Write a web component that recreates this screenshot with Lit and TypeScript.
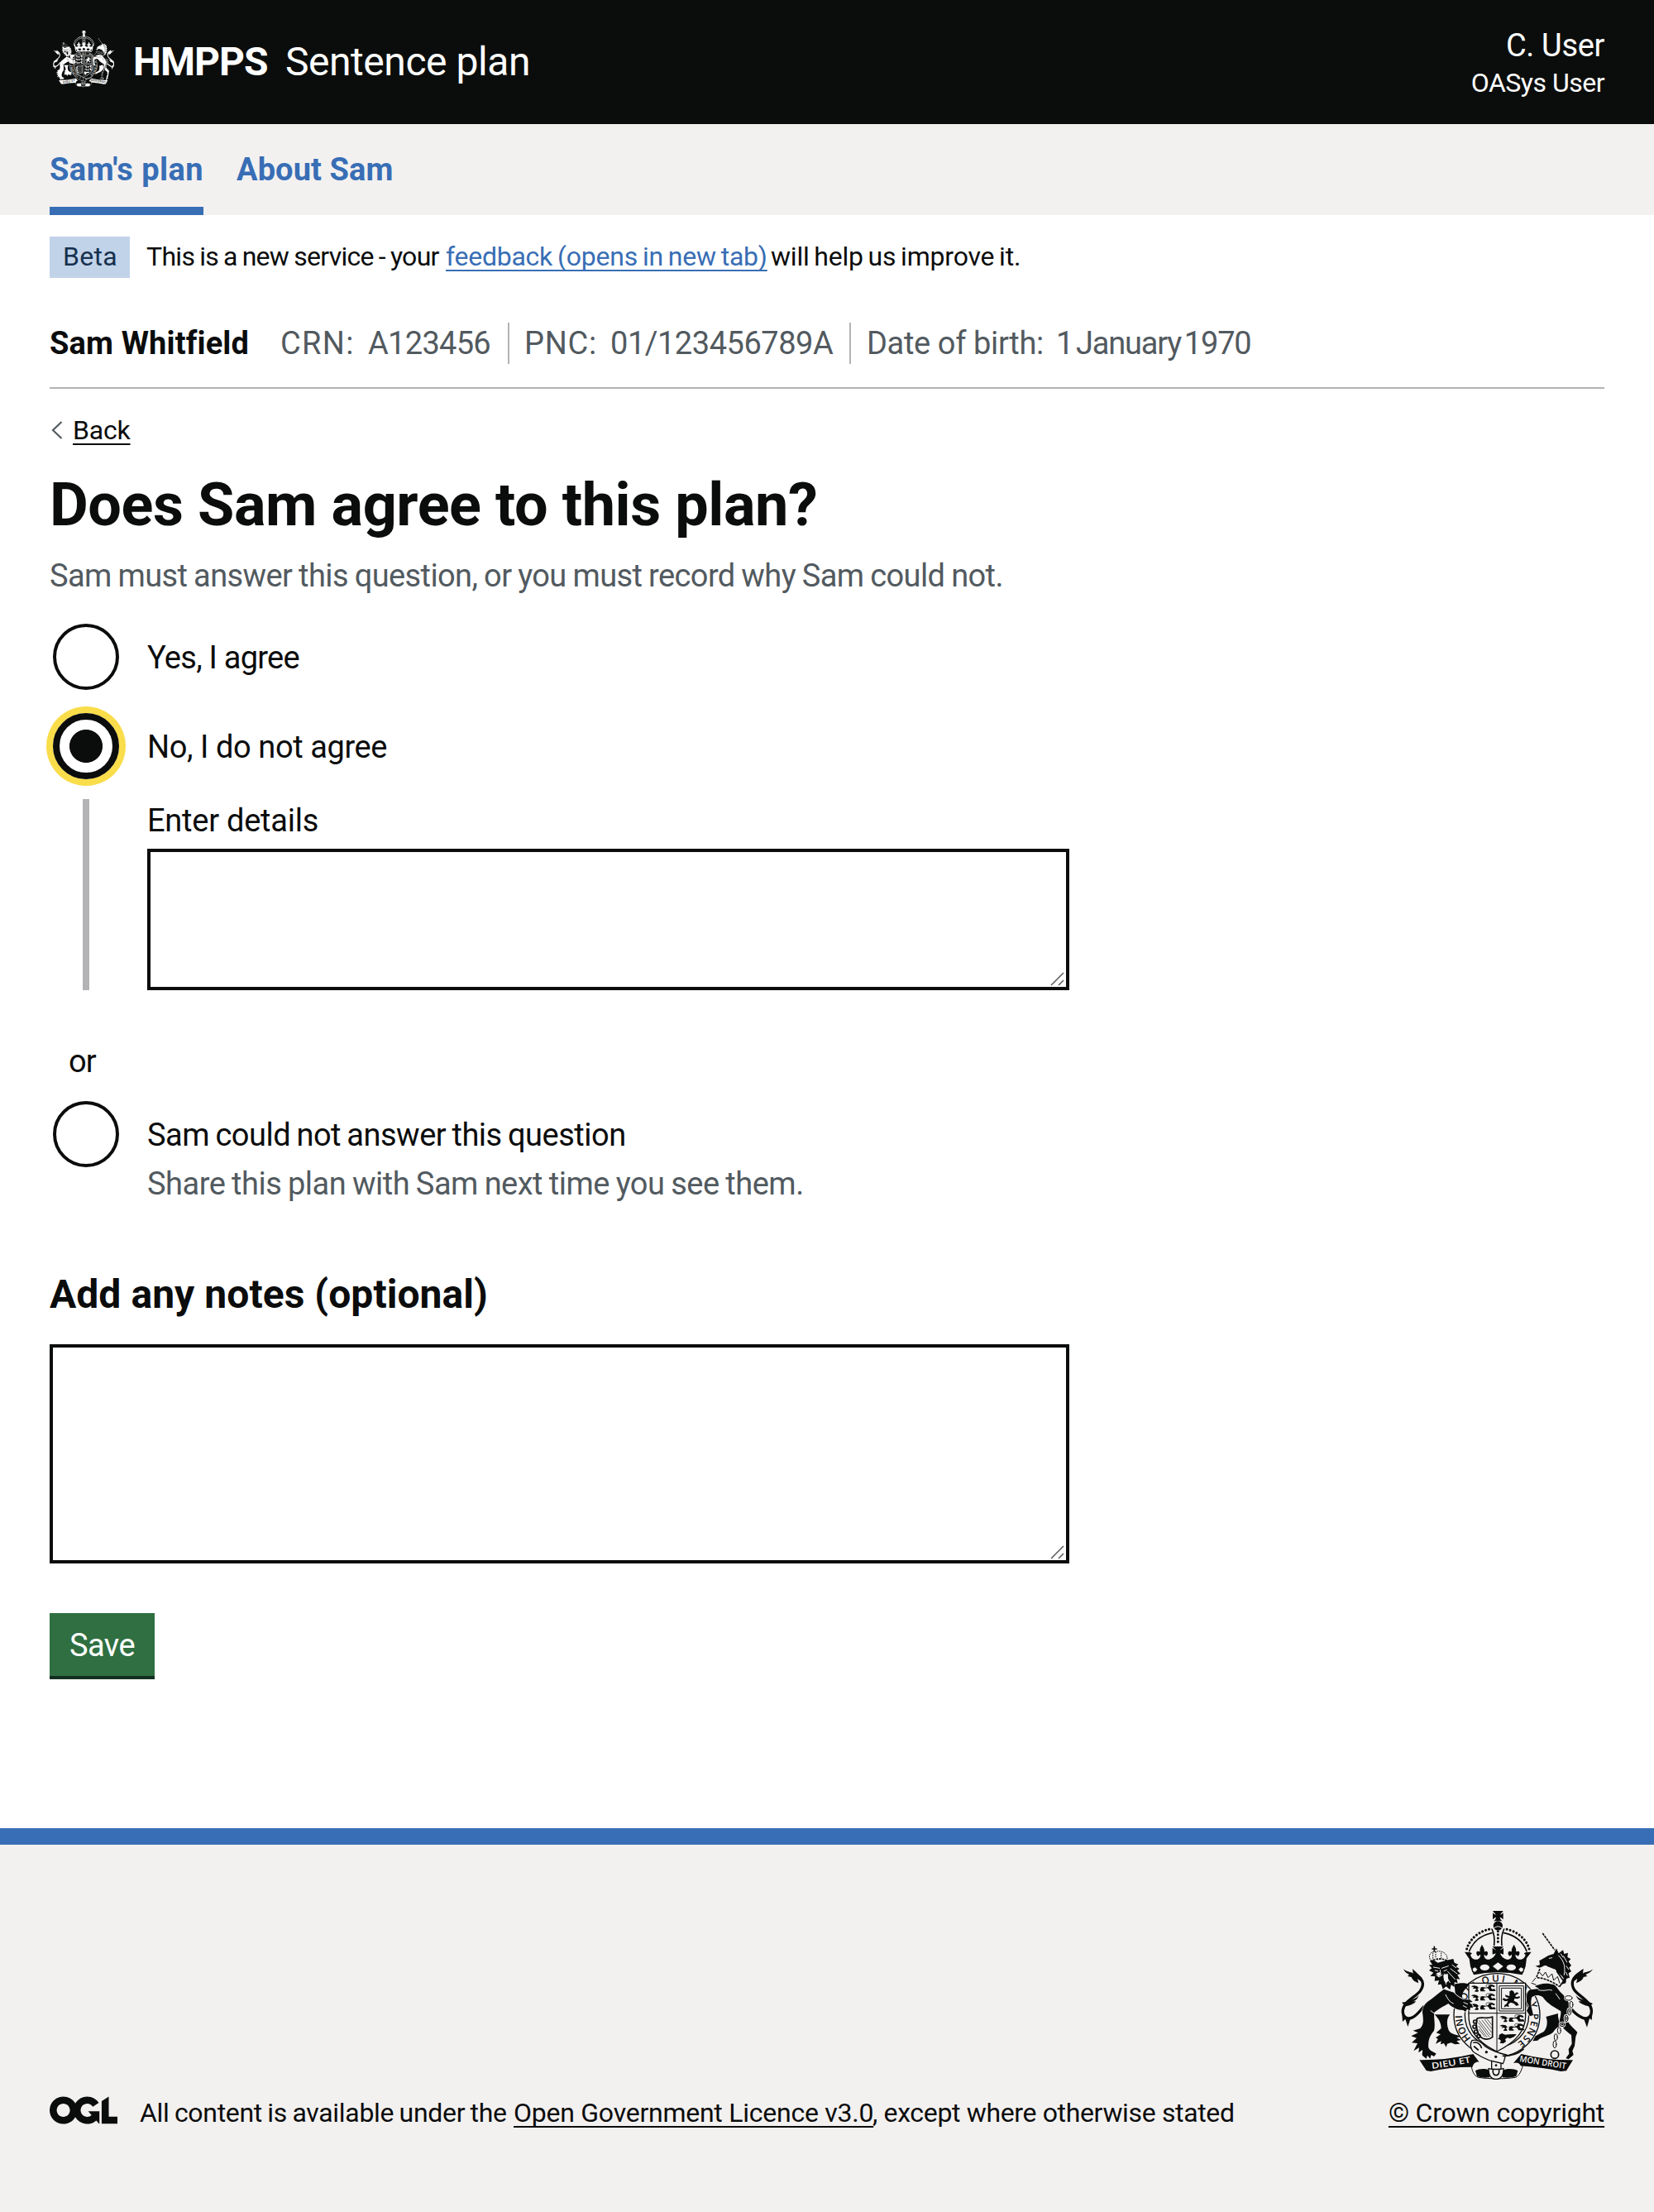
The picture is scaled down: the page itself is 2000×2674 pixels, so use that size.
import { LitElement, html, svg, css } from "lit";
import { customElement } from "lit/decorators.js";

const passantLion = (x: number, y: number) => svg`
  <path transform="translate(${x} ${y})" class="ink" d="M-8 6l6-7 8-1 10 2 5 5 6 1 8-3 14 2 8-3 2-5 8-2 8 1 6 3-2 5-10-3-3 4 5 6 8-1 4 4v4H62l-3-7-6-4-10 1-4 5 6 2v4H29l-2-6 3-6-8-1-5 5 5 5-2 4H8l1-4 5-4-5-4-9 2 5-6-8-1 3-4z"/>
  <path transform="translate(${x} ${y})" class="line thin" d="M52 4Q44-3 54-6H68Q76-4 78 2"/>`;

/* The Royal Arms: dark areas follow currentColor, openings follow --crest-paper. */
@customElement("royal-arms")
export class RoyalArms extends LitElement {
  static styles = css`
    :host { display: block; }
    .arms { display: block; width: 100%; height: 100%; overflow: visible; }
    .ink { fill: currentColor; }
    .paper { fill: var(--crest-paper); }
    .edge { fill: var(--crest-paper); stroke: currentColor; stroke-width: 4; }
    .halo { fill: currentColor; stroke: var(--crest-paper); stroke-width: 4; paint-order: stroke; }
    .line { fill: none; stroke: currentColor; stroke-width: 3; stroke-linecap: round; stroke-linejoin: round; }
    .thin { stroke-width: 2; }
    .mid { stroke-width: 5; }
    .tail { stroke-width: 10; }
    .dashed { stroke-linecap: butt; }
    .link-halo { fill: none; stroke: var(--crest-paper); stroke-width: 8; }
    .beads { fill: none; stroke: currentColor; stroke-width: 9; stroke-linecap: round; stroke-dasharray: 0.1 12.4; }
    .cut { fill: none; stroke: var(--crest-paper); stroke-width: 3; stroke-linecap: round; }
    .motto { font: 600 31px "Open Sans", "Noto Sans", sans-serif; fill: var(--crest-paper); }
    .garter { font: 600 35px "Open Sans", "Noto Sans", sans-serif; fill: currentColor; }
  `;
  render() {
    const chain = svg`<ellipse cx="650" cy="346" rx="13" ry="8"/><ellipse cx="660" cy="370" rx="6" ry="12"/><ellipse cx="653" cy="396" rx="6" ry="12"/><ellipse cx="642" cy="420" rx="6" ry="12"/><ellipse cx="627" cy="442" rx="9" ry="7"/><ellipse cx="616" cy="464" rx="6" ry="12"/><ellipse cx="604" cy="488" rx="6" ry="12"/><ellipse cx="600" cy="514" rx="6" ry="13"/>`;
    const chainHalo = svg`<ellipse cx="650" cy="346" rx="13" ry="8"/><ellipse cx="660" cy="370" rx="6" ry="12"/><ellipse cx="653" cy="396" rx="6" ry="12"/><ellipse cx="642" cy="420" rx="6" ry="12"/><ellipse cx="627" cy="442" rx="9" ry="7"/>`;
    return html`<svg class="arms" viewBox="42 30 696 612" preserveAspectRatio="none" aria-hidden="true">
      <!-- tails -->
      <path class="line tail" d="M92 262C120 270 130 296 112 320C96 342 54 356 49 390C47 412 62 424 80 418C98 412 106 398 124 378"/>
      <path class="ink" d="M52 241C64 253 78 250 86 257L84 240C98 254 120 268 120 290L102 276L106 292C90 286 84 280 80 270L66 267L72 261C60 256 54 250 52 241ZM107 335C96 350 80 351 66 357L60 360L45 362L52 370L44 392L60 376C78 372 92 366 96 358L86 358C98 354 104 346 107 335ZM46 404L48 432L58 422L67 450L76 423Z"/>
      <path class="line tail" d="M690 262C664 268 656 294 672 318C688 340 730 356 733 390C735 412 720 424 702 418C686 412 672 400 660 386"/>
      <path class="ink" d="M738 241C726 253 712 250 702 257L704 240C688 250 660 266 662 290L682 276L678 292C692 286 702 280 704 270L718 267L712 261C726 256 734 250 738 241ZM676 335C688 350 704 351 716 357L738 366L731 372L738 392L722 376C706 372 692 366 686 358L698 358C686 354 680 346 676 335ZM736 404L734 426L726 420L717 452L706 423Z"/>

      <!-- garter -->
      <ellipse class="edge" cx="390" cy="408" rx="156" ry="151"/>
      <ellipse class="edge" cx="390" cy="408" rx="116" ry="116"/>
      <path id="ring" fill="none" d="M390 532A126 122 0 0 1 264 408A126 122 0 0 1 390 287A126 122 0 0 1 516 408A126 122 0 0 1 390 532"/>
      <text class="garter"><textPath href="#ring" startOffset="104" textLength="92">HONI</textPath></text>
      <text class="garter"><textPath href="#ring" startOffset="222" textLength="96">SOIT</textPath></text>
      <text class="garter"><textPath href="#ring" startOffset="338" textLength="80">QUI</textPath></text>
      <text class="garter"><textPath href="#ring" startOffset="446">MAL</textPath></text>
      <text class="garter"><textPath href="#ring" startOffset="540">Y</textPath></text>
      <text class="garter"><textPath href="#ring" startOffset="578" textLength="124">PENSE</textPath></text>

      <!-- shield -->
      <path class="edge" d="M288 292H494V412C494 474 448 512 390 540C332 512 288 474 288 412Z"/>
      <path class="line" d="M390 292V538M288 401H494"/>
      ${passantLion(302, 303)}${passantLion(302, 336)}${passantLion(302, 369)}
      ${passantLion(406, 413)}${passantLion(406, 445)}
      <path class="ink" d="M398 480l10-6 12 5 14-1 16-1 12 1-10 9-14 6-10-3-8 6 3 8-10 7-12-2 4-8-6-5-6-1 5-6z"/>
      <path class="line" d="M400 302H487V393H400ZM408 310H479V385H408Z"/>
      <path class="ink" d="M436 322l8-5 8 6 2 8 8-6 8 4-8 4-6 6 6 4 10-4 2 6-10 4-10-1-2 8 12 6 6 10-10 2-8-8-12-4-8 6 2 10-10-2-8 4 2-8 8-6 4-10-10 2-10-6 4-6 10 4 10-4-12-4-2-8 8 3 8 2z"/>
      <path class="line mid" d="M318 420C340 412 350 424 374 414M374 414V488M318 420C312 446 318 480 338 492C352 498 366 494 374 488"/>
      <path class="line thin" d="M326 428L366 480M324 436L362 486M324 448L354 488M336 426L370 470M346 424L370 456M356 424L370 442M325 460L346 486"/>
      <circle class="line mid" cx="311" cy="432" r="6"/><circle class="line mid" cx="309" cy="450" r="6"/><circle class="line mid" cx="314" cy="468" r="6"/><circle class="line mid" cx="324" cy="484" r="6"/>

      <!-- crown -->
      <path class="ink" d="M376 30H412V32C406 37 403 41 402 44C406 43 410 40 413 37V61C410 58 406 54 401 53C402 59 404 63 411 67H377C384 63 386 59 387 53C382 54 378 58 375 61V37C378 40 382 43 386 44C385 41 382 37 376 32Z"/>
      <circle class="ink" cx="394" cy="84" r="17"/><path class="cut" d="M380 92Q394 80 408 92"/>
      <path class="beads" d="M281 168C292 128 330 102 366 96"/><path class="beads" d="M507 168C496 128 458 102 422 96"/>
      <path class="line mid" d="M290 176C306 136 334 118 372 110M498 176C482 136 454 118 416 110"/>
      <path class="line mid" d="M372 96C380 112 382 134 380 154M416 96C408 112 406 134 408 154"/>
      <path class="beads" d="M394 104V152"/>
      <path class="ink" d="M273 179L292 180L300 184L294 190C298 204 308 208 318 206C328 204 332 194 330 188L322 194C314 188 314 178 320 176L329 178C326 168 332 160 336 152C340 160 347 168 344 178L353 176C360 180 358 190 351 194L344 188C342 200 352 208 362 206C372 204 382 196 386 184L374 188V164L388 174L374 159H414L400 174L414 164V188L402 184C406 196 416 204 426 206C436 208 446 200 444 188L437 194C430 190 428 180 435 176L444 178C441 168 448 160 452 152C456 160 462 168 459 178L468 176C474 178 474 188 466 194L458 188C456 194 460 204 470 206C480 208 490 204 494 190L488 184L496 180L515 179L498 202L494 232L482 262Q394 244 306 262L294 232L290 204Z"/>
      <ellipse class="paper" cx="346" cy="235" rx="17" ry="11"/><ellipse class="paper" cx="442" cy="235" rx="17" ry="11"/>
      <path class="paper" d="M394 217L413 231L394 246L375 231Z"/>
      <path class="edge" d="M300 238L311 232L322 242L312 254L302 250ZM488 238L477 232L466 242L476 254L486 250Z"/>

      <!-- lion supporter -->
      <path class="ink" d="M236 296C256 290 276 290 290 296L280 310C272 316 262 330 264 344L240 340Z"/>
      <path class="halo" d="M198 314C178 328 158 346 138 360C122 374 118 388 121 406C124 430 124 444 112 456L86 464L104 472L79 484L99 491L81 508L102 510L88 538L108 526L106 544L120 534C122 546 114 550 124 558L134 566L138 554L148 566L152 552L162 558L170 548C160 540 146 538 142 526C139 502 146 482 162 464C168 440 160 418 163 398C174 390 188 380 204 372L214 366C228 380 246 390 268 390L276 396L282 386L292 392L294 380L303 382L300 370L290 362L302 360L292 352L272 352C254 346 244 338 234 326Z"/>
      <path class="ink" d="M164 406H220C206 420 208 446 216 464C226 480 244 476 258 486L244 490L260 498L244 502L256 512L238 514L224 508L210 512L206 524L198 510L186 514L188 502L168 512L176 494L168 490L186 478L170 472L188 456C188 436 178 420 164 406Z"/>
      <path class="cut" d="M204 334C212 350 218 360 232 366M150 392L163 402M270 362L284 368M268 374L280 380"/>
      <path class="ink" d="M148 212L160 208L176 218L204 210L232 204L236 218L250 224L242 232L254 240L246 246L258 258L247 262L256 278L244 276L248 292L236 288L236 306L224 298L220 316L206 304L194 314L188 296L176 298L180 282L164 284L166 268L148 266L160 254L144 246L154 238L144 226L156 226Z"/>
      <path class="cut" d="M160 234L182 238M190 238L214 230M170 262L180 270L192 262M184 244L186 258M200 258L220 290M212 250L238 278M222 240L246 258M228 226L242 236M198 270L206 296M166 246L176 248M198 248L208 244"/>
      <path class="paper" d="M196 262L212 258L214 284L206 292L198 282ZM170 256L184 252L188 262L178 268Z"/>
      <path class="line mid dashed" d="M148 212C172 202 192 202 210 210" stroke-dasharray="8 3"/>
      <path class="line dashed" d="M148 206C138 184 158 176 168 178C186 172 212 182 210 206M168 178V200M158 182V204M188 182V202" stroke-dasharray="5 3"/>
      <path class="line mid" d="M163 160V176M156 168H171"/>

      <!-- unicorn supporter -->
      <path class="line mid dashed" d="M556 111L600 172" stroke-dasharray="9 3"/>
      <path class="ink" d="M596 186L606 166L614 184L630 172L634 186L648 182L646 198L658 204L650 214L660 228L652 236L660 250L650 256L654 272L642 276L640 292L626 296L632 274C626 262 612 258 602 242C590 238 578 234 568 228C558 226 552 236 544 236L530 230L546 226L544 210C560 204 574 190 596 186Z"/>
      <path class="cut" d="M580 202L590 200M614 192C632 210 640 230 634 262M632 194L644 216M642 230L650 242M640 252L646 264M622 186L630 198"/>
      <path class="line mid dashed" d="M546 240L534 270M536 272C564 274 590 286 616 304" stroke-dasharray="9 3"/>
      <path class="line mid" d="M608 250C616 262 624 274 632 284L618 304"/>
      <path class="line" d="M544 252L556 266L566 252L576 272L590 258L596 282L610 268L618 292M530 274L520 286M516 292L532 298"/>
      <path class="halo" d="M528 304C548 292 572 290 598 298C606 304 610 312 620 324C636 340 654 356 656 386C654 400 648 408 644 420C648 440 664 450 682 470L676 486L672 520L664 538L668 552L650 568L640 564L652 548L650 532L662 512L660 480C640 466 628 452 620 440C614 426 624 410 622 394C600 380 574 368 556 342C540 334 528 334 516 344C512 360 514 376 518 390L522 408L510 412L498 392L506 376L498 360C498 340 496 326 510 316L544 312Z"/>
      <path class="ink" d="M568 414L612 402C610 420 620 432 618 446C606 454 600 460 594 470C576 486 552 484 538 500L520 502L530 484L560 468C572 456 576 430 568 414Z"/>
      <path class="cut" d="M540 316C560 324 578 312 590 318M604 330L618 350"/>
      <g class="link-halo">${chainHalo}</g><g class="line">${chain}</g>
      <circle class="line mid" cx="600" cy="551" r="14"/>

      <!-- motto scroll -->
      <path class="line" d="M296 584C300 612 306 628 324 634C360 640 420 640 458 634C472 626 478 612 484 592"/>
      <path class="ink" d="M312 610C326 600 356 602 362 608L364 634Q338 638 318 630ZM466 610C452 600 422 602 412 608L410 634Q440 638 460 630Z"/>
      <path class="ink" d="M109 571Q210 572 304 549L326 578C314 576 304 584 302 596Q220 596 150 612L134 609Z"/>
      <path class="ink" d="M666 571Q568 572 478 549L450 582C462 578 474 582 476 592Q560 598 622 612L642 610Z"/>
      <path id="motto-left" fill="none" d="M154 603Q236 592 312 576"/>
      <path id="motto-right" fill="none" d="M471 576Q550 590 646 604"/>
      <text class="motto"><textPath href="#motto-left" textLength="144" lengthAdjust="spacingAndGlyphs">DIEU ET</textPath></text>
      <text class="motto"><textPath href="#motto-right" textLength="171" lengthAdjust="spacingAndGlyphs">MON DROIT</textPath></text>

      <!-- belt and buckle -->
      <path class="edge" d="M300 500C316 494 332 504 346 520C366 534 398 546 424 552C416 560 420 572 412 584C380 580 342 566 312 546C296 538 290 514 300 500Z"/>
      <path class="line mid" d="M306 508C318 504 330 512 334 526M308 522L322 534M412 556C440 556 468 548 486 532"/>
      <circle class="ink" cx="352" cy="542" r="5"/><circle class="ink" cx="386" cy="559" r="5"/>
      <path class="edge" d="M371 574L405 582V604H371Z"/><circle class="ink" cx="387" cy="590" r="4"/>
      <path class="edge" d="M360 602C372 606 402 606 414 602C414 626 406 640 387 640C368 640 360 626 360 602Z"/>
      <path class="line mid" d="M376 608C372 632 402 632 398 608"/>
    </svg>`;
  }
}

@customElement("app-root")
export class AppRoot extends LitElement {
  static styles = css`
    :host {
      display: block; width: 2000px; height: 2674px; overflow: hidden;
      font-family: Roboto, "Liberation Sans", sans-serif; font-size: 38px; line-height: 50px;
      color: #0b0c0c; background: #fff; --blue: #386eb5; --grey: #525a5f; --rule: #b3b3b6; --soft: #f3f1f0;
    }
    * { box-sizing: border-box; }
    h1, h2, p { margin: 0; }
    a { text-decoration: underline; text-decoration-thickness: 2px; text-underline-offset: 5px; text-decoration-skip-ink: none; color: inherit; }
    .small { font-size: 32px; line-height: 40px; }
    .header { height: 150px; padding: 0 60px; background: #0b0d0c; color: #fff; display: flex; justify-content: space-between; align-items: center; --crest-paper: #0b0d0c; }
    .brand { display: flex; align-items: center; font-size: 48px; line-height: 60px; white-space: nowrap; }
    .header-arms { width: 74px; height: 68px; margin: -8px 23px 0 4px; }
    .org { font-weight: 700; width: 184px; letter-spacing: -0.95px; }
    .product { letter-spacing: -0.45px; }
    .user { display: flex; flex-direction: column; align-items: flex-end; }
    .user-name { letter-spacing: -0.35px; }
    .user-role { letter-spacing: -0.5px; }
    .nav { height: 110px; background: var(--soft); padding: 0 60px; display: flex; gap: 40px; font-weight: 700; color: var(--blue); white-space: nowrap; }
    .tab { text-decoration: none; padding-top: 30px; height: 110px; }
    .tab-plan { width: 186px; border-bottom: 10px solid var(--blue); letter-spacing: 0.45px; }
    .tab-about { letter-spacing: 0.1px; }
    .page { padding: 0 60px; height: 1950px; display: flex; flex-direction: column; align-items: flex-start; white-space: nowrap; }
    .phase { display: flex; margin-top: 26px; height: 50px; padding: 0; }
    .tag { width: 97px; height: 50px; padding: 4px 0 0 16px; margin-right: 20px; background: #c1d3e8; color: #16304f; letter-spacing: 0.3px; font-weight: 400; }
    .phase-text { padding-top: 4px; display: flex; }
    .phase-a { letter-spacing: -0.7px; word-spacing: -1.3px; width: 362px; }
    .phase-link { color: var(--blue); letter-spacing: -0.25px; word-spacing: -1.7px; width: 388px; margin-right: 5px; }
    .phase-c { letter-spacing: -0.2px; word-spacing: -2px; }
    .person { width: 1880px; height: 80px; margin-top: 54px; border-bottom: 2px solid var(--rule); display: flex; align-items: flex-start; line-height: 51px; color: var(--grey); }
    .person-name { width: 279px; font-weight: 700; color: #0b0c0c; letter-spacing: 0.15px; }
    .detail { display: flex; height: 50px; }
    .detail + .detail { border-left: 2px solid var(--rule); }
    .crn { width: 275px; } .pnc { width: 413px; padding-left: 18px; } .dob { padding-left: 19px; }
    .crn-label { width: 106px; letter-spacing: 1.3px; } .crn-value { letter-spacing: -0.7px; }
    .pnc-label { width: 104px; letter-spacing: 0.73px; } .pnc-value { letter-spacing: -0.47px; }
    .dob-label { width: 229px; letter-spacing: -0.36px; } .dob-value { letter-spacing: -1.2px; word-spacing: -4.4px; }
    .back { display: flex; margin-top: 30px; height: 40px; }
    .chevron { width: 14px; height: 22px; margin: 9px 12px 0 2px; fill: none; stroke: var(--grey); stroke-width: 2.2; }
    .back-link { letter-spacing: -0.2px; }
    .title { margin-top: 31px; font-size: 72px; line-height: 80px; font-weight: 700; letter-spacing: -0.42px; }
    .hint { color: var(--grey); letter-spacing: -0.6px; word-spacing: -1.1px; }
    .title-hint { margin-top: 20px; }
    .choice { display: flex; }
    .first { margin-top: 33px; } .second { margin-top: 28px; } .third { margin-top: 23px; }
    .radio { width: 80px; height: 80px; margin: 0 34px 0 4px; border: 4px solid #0b0c0c; border-radius: 50%; }
    .radio-on { border-width: 8px; box-shadow: 0 0 0 8px #f9dd4a; background: radial-gradient(circle, #0b0c0c 19.6px, #fff 20.4px); }
    .choice-text { padding-top: 16px; height: 80px; }
    .with-hint { height: 125px; }
    .yes { letter-spacing: -0.75px; } .no { letter-spacing: -0.4px; }
    .could { letter-spacing: -0.5px; word-spacing: -1.6px; }
    .share { margin-top: 9px; letter-spacing: -0.5px; word-spacing: -1.2px; }
    .conditional { margin: 24px 0 0 40px; height: 231px; border-left: 8px solid var(--rule); padding-left: 70px; }
    .enter { height: 50px; line-height: 52px; letter-spacing: -0.25px; }
    .field { display: flex; align-items: flex-end; justify-content: flex-end; border: 4px solid #0b0c0c; background: #fff; padding: 0 1px 0 0; }
    .details { width: 1115px; height: 171px; margin-top: 10px; }
    .notes { width: 1233px; height: 265px; margin-top: 30px; }
    .grip { width: 18px; height: 18px; stroke: #5a5a5a; stroke-width: 1.5; fill: none; }
    .or { margin: 61px 0 0 23px; letter-spacing: -1px; }
    .notes-title { margin-top: 79px; font-size: 48px; line-height: 60px; font-weight: 700; letter-spacing: 0.05px; }
    .save { font: inherit; color: #fff; background: #2f6f41; border: 0; border-bottom: 4px solid #142f21; width: 127px; height: 80px; margin: 60px 0 0; padding: 14px 0 12px; letter-spacing: -0.54px; text-align: center; }
    .footer { height: 464px; padding: 80px 60px 0; background: var(--soft); border-top: 20px solid var(--blue); display: flex; justify-content: space-between; --crest-paper: var(--soft); white-space: nowrap; }
    .licence { display: flex; padding-top: 224px; }
    .ogl { width: 82px; height: 34px; margin-right: 27px; fill: currentColor; }
    .lic-a { width: 452px; letter-spacing: -0.3px; word-spacing: -1.3px; }
    .lic-link { letter-spacing: -0.25px; width: 434px; }
    .lic-c { letter-spacing: -0.35px; }
    .crown { display: flex; flex-direction: column; align-items: center; width: 261px; }
    .footer-arms { width: 232px; height: 204px; }
    .copyright { margin-top: 20px; letter-spacing: -0.22px; }
  `;
  private grip() {
    return html`<svg class="grip" viewBox="0 0 18 18"><path d="M1 16L16 1M10 16L16 10"/></svg>`;
  }
  render() {
    return html`
      <header class="header">
        <div class="brand"><royal-arms class="header-arms"></royal-arms><span class="org">HMPPS</span><span class="product">Sentence plan</span></div>
        <div class="user"><span class="user-name">C. User</span><span class="user-role small">OASys User</span></div>
      </header>
      <nav class="nav"><a class="tab tab-plan">Sam's plan</a><a class="tab tab-about">About Sam</a></nav>
      <main class="page">
        <div class="phase small"><strong class="tag">Beta</strong>
          <div class="phase-text"><span class="phase-a">This is a new service - your</span><a class="phase-link">feedback (opens in new tab)</a><span class="phase-c">will help us improve it.</span></div>
        </div>
        <div class="person">
          <span class="person-name">Sam Whitfield</span>
          <div class="detail crn"><span class="crn-label">CRN:</span><span class="crn-value">A123456</span></div>
          <div class="detail pnc"><span class="pnc-label">PNC:</span><span class="pnc-value">01/123456789A</span></div>
          <div class="detail dob"><span class="dob-label">Date of birth:</span><span class="dob-value">1 January 1970</span></div>
        </div>
        <div class="back small"><svg class="chevron" viewBox="0 0 14 22"><path d="M12.5 1L2 11L12.5 21"/></svg><a class="back-link">Back</a></div>
        <h1 class="title">Does Sam agree to this plan?</h1>
        <p class="hint title-hint">Sam must answer this question, or you must record why Sam could not.</p>
        <div class="choice first"><span class="radio"></span><div class="choice-text yes">Yes, I agree</div></div>
        <div class="choice second"><span class="radio radio-on"></span><div class="choice-text no">No, I do not agree</div></div>
        <div class="conditional"><div class="enter">Enter details</div><div class="field details">${this.grip()}</div></div>
        <div class="or">or</div>
        <div class="choice third"><span class="radio"></span><div class="choice-text with-hint"><div class="could">Sam could not answer this question</div><div class="hint share">Share this plan with Sam next time you see them.</div></div></div>
        <h2 class="notes-title">Add any notes (optional)</h2>
        <div class="field notes">${this.grip()}</div>
        <button class="save">Save</button>
      </main>
      <footer class="footer">
        <div class="licence small">
          <svg class="ogl" viewBox="0 0 483.2 195.7"><path d="M421.5 142.8V.1l-50.7 32.3v161.1h112.4v-50.7zm-122.3-9.6A47.12 47.12 0 0 1 221 97.8c0-26 21.1-47.1 47.1-47.1 16.7 0 31.4 8.7 39.7 21.8l42.7-27.2A97.63 97.63 0 0 0 268.1 0c-36.5 0-68.3 20.1-85.1 49.7A98 98 0 0 0 97.8 0C43.9 0 0 43.9 0 97.8s43.9 97.8 97.8 97.8c36.5 0 68.3-20.1 85.1-49.7a97.76 97.76 0 0 0 149.6 25.4l19.4 22.2h3v-87.8h-80l24.3 27.5zM97.8 145c-26 0-47.1-21.1-47.1-47.1s21.1-47.1 47.1-47.1 47.1 21.1 47.1 47.1S123.8 145 97.8 145"/></svg>
          <span class="lic-a">All content is available under the</span><a class="lic-link">Open Government Licence v3.0</a><span class="lic-c">, except where otherwise stated</span>
        </div>
        <div class="crown"><royal-arms class="footer-arms"></royal-arms><a class="copyright small">© Crown copyright</a></div>
      </footer>`;
  }
}
